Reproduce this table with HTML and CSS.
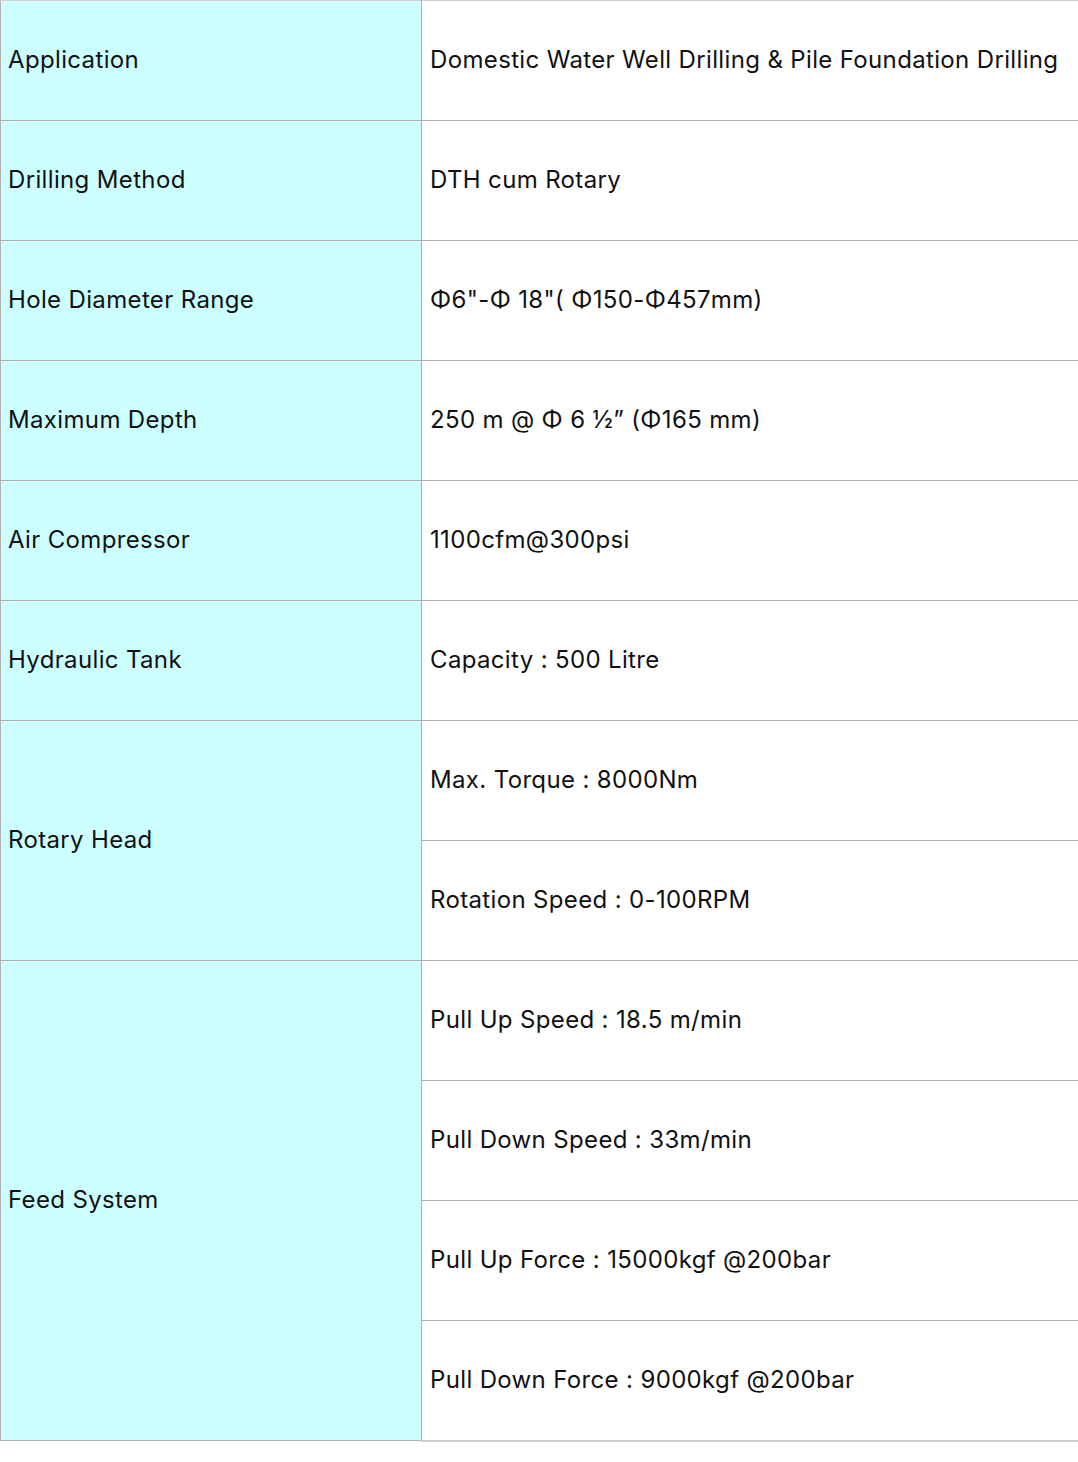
FILE: index.html
```html
<!DOCTYPE html>
<html>
<head>
<meta charset="utf-8">
<link rel="stylesheet" href="styles.css">
</head>
<body>
<table class="spec">
  <tr><td class="key">Application</td><td class="val">Domestic Water Well Drilling &amp; Pile Foundation Drilling</td></tr>
  <tr><td class="key">Drilling Method</td><td class="val">DTH cum Rotary</td></tr>
  <tr><td class="key">Hole Diameter Range</td><td class="val">Φ6"-Φ 18"( Φ150-Φ457mm)</td></tr>
  <tr><td class="key">Maximum Depth</td><td class="val">250 m @ Φ 6 ½” (Φ165 mm)</td></tr>
  <tr><td class="key">Air Compressor</td><td class="val">1100cfm@300psi</td></tr>
  <tr><td class="key">Hydraulic Tank</td><td class="val">Capacity : 500 Litre</td></tr>
  <tr><td class="key" rowspan="2">Rotary Head</td><td class="val">Max. Torque : 8000Nm</td></tr>
  <tr><td class="val">Rotation Speed : 0-100RPM</td></tr>
  <tr><td class="key" rowspan="4">Feed System</td><td class="val">Pull Up Speed : 18.5 m/min</td></tr>
  <tr><td class="val">Pull Down Speed : 33m/min</td></tr>
  <tr><td class="val">Pull Up Force : 15000kgf @200bar</td></tr>
  <tr><td class="val">Pull Down Force : 9000kgf @200bar</td></tr>
</table>
</body>
</html>
```
FILE: styles.css
```css
html, body {
  margin: 0;
  padding: 0;
  background: #ffffff;
  overflow: hidden;
}
.spec {
  border-collapse: collapse;
  width: 1080px;
  table-layout: fixed;
  font-family: "Inter", "Liberation Sans", sans-serif;
  font-size: 24px;
  letter-spacing: 0.35px;
  color: #111111;
}
.spec tr {
  height: 120px;
}
.spec td {
  border: 1px solid #b0b0b0;
  padding: 0 0 2px 8px;
  vertical-align: middle;
  white-space: nowrap;
}
.spec .key {
  width: 413px;
  padding-left: 7px;
  background: #ccffff;
}
.spec tr:first-child td {
  border-top-color: #cfcfcf;
}
.spec tr:last-child td {
  border-bottom: 2px solid #cfcfcf;
}
```
